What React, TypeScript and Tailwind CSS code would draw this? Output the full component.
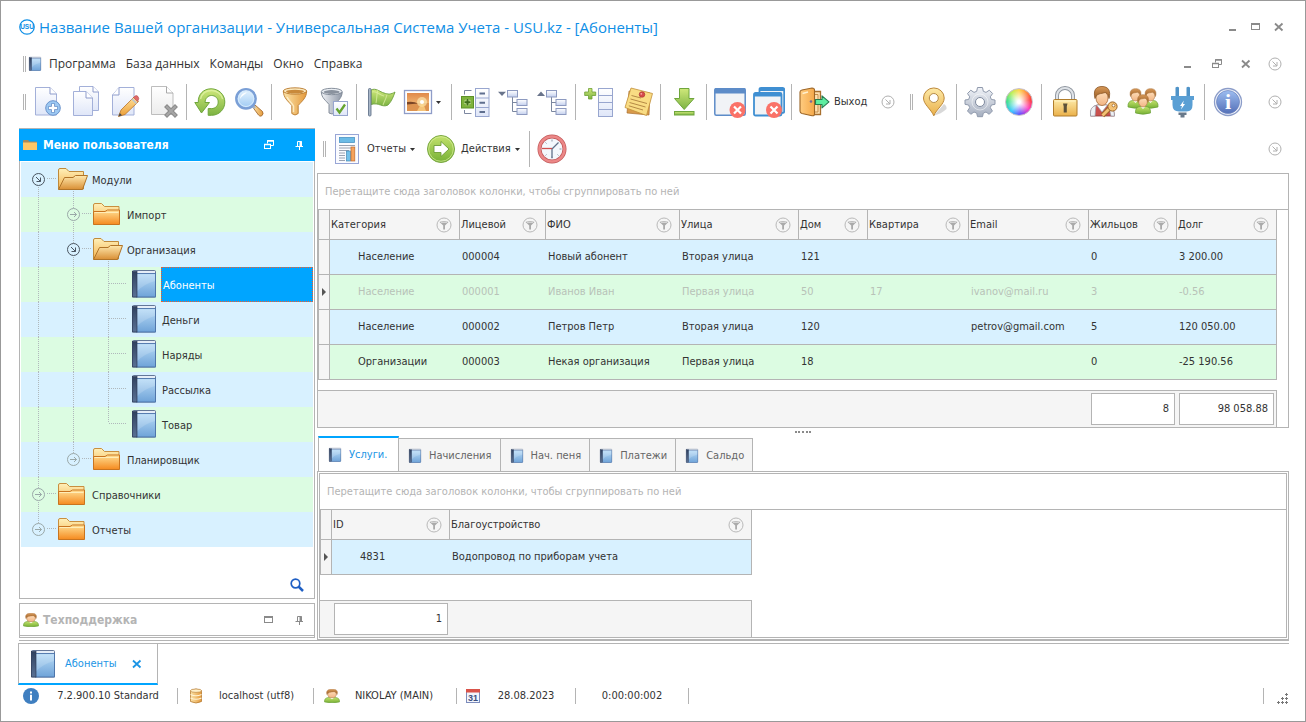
import React from "react";

type IconProps = { children: React.ReactNode; size?: string };

const Svg = ({ children, size = "size-8" }: IconProps) => (
  <svg viewBox="0 0 32 32" className={`${size} shrink-0`} fill="none" aria-hidden="true">
    {children}
  </svg>
);

const gradients: [string, string, string, string][] = [
  ["page", "#ffffff", "#dfe6f8", "v"],
  ["gray", "#ffffff", "#ececec", "v"],
  ["green", "#cfe87a", "#7cb342", "v"],
  ["greenDark", "#c3e26c", "#76b035", "v"],
  ["gold", "#fbe3a8", "#e59a3c", "h"],
  ["goldV", "#fdeaa8", "#eab04a", "v"],
  ["silver", "#f1f3f7", "#8e97a6", "h"],
  ["pencil", "#ffe19a", "#eb9d35", "v"],
  ["lens", "#e8f5ff", "#9cc9f3", "v"],
  ["sunset", "#e0894a", "#f9d08c", "v"],
  ["book", "#b9dcf7", "#6fa3d8", "v"],
  ["spine", "#30415f", "#5a7194", "v"],
  ["folder", "#ffdf94", "#f58a1f", "v"],
  ["folderBack", "#fff0b8", "#f3b24e", "v"],
  ["folderOpen", "#ffe9ad", "#d98f35", "v"],
  ["door", "#ffcc80", "#f5a94a", "h"],
  ["gear", "#f0f3f8", "#a5aebf", "v"],
  ["info", "#9dbdf0", "#5470b8", "v"],
  ["skin", "#ffe0bd", "#f2b584", "v"],
  ["hair", "#d89a5a", "#9a5c22", "v"],
  ["node", "#ffffff", "#c4d0ee", "v"],
];

const Defs = () => (
  <svg className="absolute h-0 w-0" aria-hidden="true">
    <defs>
      {gradients.map(([id, from, to, dir]) => (
        <linearGradient key={id} id={id} x1="0" y1="0" x2={dir === "h" ? "1" : "0"} y2={dir === "h" ? "0" : "1"}>
          <stop offset="0" stopColor={from} />
          <stop offset="1" stopColor={to} />
        </linearGradient>
      ))}
    </defs>
  </svg>
);

const NewDocIcon = () => (
  <Svg>
    <path d="M4.500 1.500H19L25.500 8V29H4.500Z" fill="url(#page)" stroke="#a3b0d9" />
    <path d="M19 1.500V8H25.500" fill="#fff" stroke="#8d9bcb" />
    <circle cx="22" cy="22" r="7.300" fill="#9cc8f2" stroke="#6c94cc" />
    <path d="M22 17.500V26.500M17.500 22H26.500" stroke="#5f86c0" strokeWidth="4" />
    <path d="M22 18V26M18 22H26" stroke="#fff" strokeWidth="2.400" />
  </Svg>
);
const CopyIcon = () => (
  <Svg>
    <path d="M9.500 .5H23L28.500 6V24.500H9.500Z" fill="url(#page)" stroke="#a3b0d9" />
    <path d="M23 .5V6H28.500" fill="#fff" stroke="#8d9bcb" />
    <path d="M3.500 5.500H16L22.500 12V29.500H3.500Z" fill="url(#page)" stroke="#a3b0d9" />
    <path d="M16 5.500V12H22.500" fill="#fff" stroke="#8d9bcb" />
  </Svg>
);
const EditIcon = () => (
  <Svg>
    <path d="M10 1.500H25V29H3.500V9Z" fill="url(#page)" stroke="#a3b0d9" />
    <path d="M10 1.500V9H3.500" fill="#fff" stroke="#8d9bcb" />
    <path d="M9.500 30.500L12 24L25 11L29.500 15.500L16 28.500Z" fill="url(#pencil)" stroke="#b8742a" strokeWidth=".8" />
    <path d="M24.500 11.500L26 10Q27.500 9 29 10.500Q30.500 12.500 29.300 14L28.500 15.500Z" fill="#e06a6a" stroke="#b14a4a" strokeWidth=".6" />
    <path d="M23 13L27.500 17.500" stroke="#b9c3d2" strokeWidth="1.600" />
    <path d="M9.500 30.500L10.800 27L13 29.200Z" fill="#43484f" />
  </Svg>
);
const DeleteIcon = () => (
  <Svg>
    <path d="M3.500 .5H18.500L25 7V28.500H3.500Z" fill="url(#gray)" stroke="#bdbdbd" />
    <path d="M18.500 .5V7H25" fill="#fff" stroke="#a9a9a9" />
    <path d="M19 21L27 29M27 21L19 29" stroke="#8c8c8c" strokeWidth="4.200" strokeLinecap="square" />
    <path d="M19 21L27 29M27 21L19 29" stroke="#a6a6a6" strokeWidth="2" strokeLinecap="square" />
  </Svg>
);
const RefreshIcon = () => (
  <Svg>
    <path
      d="M4.300 16.500C3.800 8.500 9.500 2.800 17 2.800C25 2.800 30.800 8.800 30.800 16C30.800 23.500 25 29.300 17.500 29.300H14.200V22.600H17.500C21.500 22.600 24.200 19.600 24.200 16C24.200 12.200 21.200 9.500 17.500 9.500C14 9.500 11.300 12 11 16.500H15.500L7.500 27L.8 16.500Z"
      fill="url(#green)"
      stroke="#6fa63c"
      strokeLinejoin="round"
    />
    <path d="M6.500 13C8 7 13 4.500 18 4.600C23 4.800 27.500 8 28.700 13" stroke="#e0f2a5" strokeWidth="1.500" opacity=".8" />
  </Svg>
);
const SearchIcon = () => (
  <Svg>
    <path d="M20 21.500L22 19L29.500 25.500Q31 28 28.500 30Q26.800 30.600 25.500 29Z" fill="url(#gold)" stroke="#a66a2c" strokeWidth=".9" />
    <path d="M18.500 18.500L22 22" stroke="#a9b3bf" strokeWidth="3" />
    <circle cx="13" cy="12.800" r="9.700" fill="url(#lens)" stroke="#7a9fd6" strokeWidth="2.400" />
    <circle cx="13" cy="12.800" r="7.700" stroke="#d7ebfc" />
    <path d="M7 13C7.500 9 10 6.500 14 6.500C12 8.500 9 9.500 7 13Z" fill="#fff" opacity=".9" />
  </Svg>
);
const FunnelIcon = () => (
  <Svg>
    <path d="M4.300 5C4.500 12 9 15 12.800 19.500V27.500Q16 30.500 19.200 27.500V19.500C23 15 27.500 12 27.700 5Z" fill="url(#gold)" stroke="#b9792c" strokeWidth=".9" />
    <ellipse cx="16" cy="5" rx="11.700" ry="3.200" fill="#fbe9bf" stroke="#b9792c" strokeWidth=".9" />
    <ellipse cx="16" cy="5.600" rx="9" ry="1.900" fill="#c98a3b" />
    <path d="M8 11C10 15 13 17 14.500 20V26" stroke="#fff4d3" strokeWidth="1.500" opacity=".8" />
  </Svg>
);
const FunnelCheckIcon = () => (
  <Svg>
    <path d="M3.300 6C3.500 12 8 14.500 11 18.500V27Q14 29 17 27V18.500C20 14.500 24 12 24.200 6Z" fill="url(#silver)" stroke="#7b8492" strokeWidth=".9" />
    <ellipse cx="13.700" cy="5.500" rx="10.400" ry="3.200" fill="#e9edf2" stroke="#7b8492" strokeWidth=".9" />
    <ellipse cx="13.700" cy="6" rx="8" ry="1.900" fill="#8a929e" />
    <rect x="15.500" y="15.500" width="14" height="14" fill="url(#page)" stroke="#98a6cf" />
    <path d="M18.500 22.500L21.500 26.500L27 18.500" stroke="#65a42f" strokeWidth="2.300" />
  </Svg>
);
const FlagIcon = () => (
  <Svg>
    <path d="M7 4C12 1.500 16 6 20 7C24 8.500 27 8.500 31 6C29.500 10 28 15 24 19C18 22 15 16 7 18.500Z" fill="url(#green)" stroke="#6c9f3c" strokeWidth=".9" />
    <path d="M8 6C13 4.500 15 9 20 10M14 4C12 10 13 14 12 17M23 8.500C22 13 20 16 19 19" stroke="#dff0a8" strokeWidth="1.100" opacity=".7" />
    <rect x="4.500" y="2.500" width="2.500" height="27.500" rx="1" fill="#a9b7c9" stroke="#64748b" strokeWidth=".9" />
  </Svg>
);
const PictureIcon = () => (
  <Svg>
    <rect x="2.500" y="4.500" width="27" height="23" fill="#fff" stroke="#8f9dc8" strokeWidth="1.300" />
    <rect x="5" y="7" width="22" height="18" fill="url(#sunset)" />
    <path d="M5 17H27V25H5Z" fill="#dd9350" />
    <path d="M5 16Q12 15 16 17.500L5 18.500Z" fill="#7a4526" />
    <circle cx="20" cy="16" r="5" fill="#fff1bd" opacity=".6" />
    <circle cx="20" cy="16" r="2" fill="#fff" />
    <path d="M15 25L19 18H21.500L24 25Z" fill="#ffd98a" opacity=".7" />
  </Svg>
);
const GroupRowsIcon = () => (
  <Svg>
    <path d="M5.500 8.500V4.500H12.500M5.500 24V27.500H12.500" stroke="#7d87a0" />
    <rect x="16.500" y="2.500" width="13.500" height="28" fill="url(#page)" stroke="#98a6cf" />
    <path d="M16.500 12H30M16.500 21.500H30" stroke="#98a6cf" />
    <path d="M20.500 7.500H26M20.500 16.800H26M20.500 26H26" stroke="#5f6f8f" strokeWidth="2" />
    <rect x="2.500" y="10.500" width="12" height="11.500" fill="#7db23c" stroke="#5d9129" />
    <path d="M8.500 13V19.500M5.200 16.200H11.800" stroke="#c9e59a" strokeWidth="3.400" />
    <path d="M8.500 13V19.500M5.500 16.200H11.500" stroke="#3f6f1b" strokeWidth="2" />
  </Svg>
);
const TreeIcon = ({ up = false }: { up?: boolean }) => (
  <Svg>
    <path d={up ? "M0 10H8L4 5.500Z" : "M0 5.800H8L4 10Z"} fill="#69748b" />
    <path d="M14.500 11V25.500H19M14.500 16.500H19" stroke="#7b879f" />
    <rect x="9.500" y="4.500" width="10" height="6.500" fill="url(#node)" stroke="#8d9ac0" />
    <rect x="19" y="13.500" width="10" height="6" fill="url(#node)" stroke="#8d9ac0" />
    <rect x="19" y="22.500" width="10" height="6" fill="url(#node)" stroke="#8d9ac0" />
  </Svg>
);
const AddColumnIcon = () => (
  <Svg>
    <rect x="15.500" y="2.500" width="14" height="28" fill="url(#page)" stroke="#98a6cf" />
    <path d="M15.500 9.500H29.500M15.500 16.500H29.500M15.500 23.500H29.500" stroke="#98a6cf" />
    <path d="M5.500 2.500H9V6H12.700V9.500H9V13H5.500V9.500H1.700V6H5.500Z" fill="url(#green)" stroke="#6c9f36" strokeWidth=".8" />
  </Svg>
);
const NotesIcon = () => (
  <Svg>
    <path d="M7 5L28 7L27 29L5 27Z" fill="#d99a4a" stroke="#a9702f" strokeWidth=".7" />
    <path d="M9 2L30.500 7.500L24.500 29.500L3 21.500Z" fill="#f9dc83" stroke="#c28f3a" strokeWidth=".8" />
    <path d="M9.500 9.500L19 12M8.500 13L25 17.500M7.500 16.500L23.500 21M6.800 19.800L21 24" stroke="#b58a45" />
    <circle cx="20" cy="8.500" r="2.800" fill="#d64a4a" stroke="#a52f2f" strokeWidth=".6" />
    <circle cx="19.300" cy="7.800" r=".9" fill="#f5a8a8" />
  </Svg>
);
const DownloadIcon = () => (
  <Svg>
    <path d="M11.500 2.500H21V12.500H26L16.200 23.500L6.500 12.500H11.500Z" fill="url(#green)" stroke="#6fa63c" strokeLinejoin="round" />
    <rect x="6.500" y="25.500" width="19.500" height="3.500" fill="url(#green)" stroke="#6fa63c" />
  </Svg>
);
const RedCross = ({ x }: { x: number }) => (
  <>
    <circle cx={x} cy="24" r="8" fill="#fa7268" />
    <path d={`M${x - 3.5} 20.500L${x + 3.5} 27.500M${x + 3.5} 20.500L${x - 3.5} 27.500`} stroke="#fff" strokeWidth="2.200" />
  </>
);
const CloseWindowIcon = () => (
  <Svg>
    <rect x=".8" y="2.800" width="30.400" height="26.500" rx="1.500" fill="#f1f3f6" stroke="#5d8cc8" strokeWidth="1.500" />
    <path d="M.5 3Q.5 2 2 2H30Q31.500 2 31.500 3V7.500H.5Z" fill="#5d8cc8" />
    <RedCross x={23.5} />
  </Svg>
);
const CloseAllIcon = () => (
  <Svg>
    <rect x="6.500" y="1.800" width="24.700" height="25" rx="1.500" fill="#f1f3f6" stroke="#3f8fd2" strokeWidth="1.800" />
    <path d="M6 2H31V5H6Z" fill="#3f8fd2" />
    <rect x="1" y="7" width="27.500" height="22.500" rx="1.500" fill="#f1f3f6" stroke="#3f8fd2" strokeWidth="1.800" />
    <path d="M1 7H28V10.500H1Z" fill="#3f8fd2" />
    <RedCross x={21} />
  </Svg>
);
const DoorIcon = () => (
  <Svg>
    <path d="M14 5.500H22.500V28.500H14" fill="#ffe0b0" stroke="#a9702f" strokeWidth="1.300" />
    <path d="M17 8.500H20V26H17" stroke="#c48d4a" />
    <path d="M2 6Q2 4.500 4 4L14 2Q16.500 2 16.500 4V28Q16.500 30 14 29.700L4 27.500Q2 27 2 25Z" fill="url(#door)" stroke="#9c6526" strokeWidth="1.100" />
    <path d="M4.500 7.500L10 6" stroke="#fff0cf" strokeWidth="1.300" />
    <circle cx="13" cy="15.500" r="1.300" fill="#7a6a9a" />
    <path d="M17.500 13.500H24V9.800L31 15.800L24 21.800V18.500H17.500Z" fill="#5eeda0" stroke="#277a50" strokeWidth="1.100" strokeLinejoin="round" />
  </Svg>
);
const PinIcon = () => (
  <Svg>
    <path d="M16 29.500L26 18Q29 20 28.500 23Q23 28 16 29.500Z" fill="#8e8e8e" opacity=".35" />
    <path d="M15.800 29.800C13 23 5.500 18.500 5.500 12A10.300 10 0 0 1 26.200 12C26.200 18.500 18.500 23 15.800 29.800Z" fill="url(#goldV)" stroke="#bd8838" />
    <circle cx="15.800" cy="12" r="4.500" fill="#fff" stroke="#b58a45" />
  </Svg>
);
const GearIcon = () => (
  <Svg>
    <path
      d="M13.500 1.500H18.500L19.300 5.300L22 6.400L25.300 4.200L28.600 7.500L26.300 10.800L27.400 13.500L31 14V18.300L27.400 19L26.300 21.700L28.400 25L25.200 28.300L22 26L19.300 27.100L18.500 30.700H13.500L12.700 27.100L10 26L6.800 28.300L3.500 25L5.700 21.700L4.600 19L1 18.300V14L4.600 13.500L5.700 10.800L3.500 7.500L6.800 4.200L10 6.400L12.700 5.300Z"
      fill="url(#gear)"
      stroke="#8f99ac"
      strokeLinejoin="round"
    />
    <circle cx="16" cy="16" r="8" stroke="#fff" opacity=".5" />
    <circle cx="16" cy="16" r="4.500" fill="#fff" stroke="#7f8a9e" />
  </Svg>
);
const ColorWheel = () => (
  <span className="size-7 rounded-full border border-[#c8c0cc] bg-[radial-gradient(circle,#ffffff_8%,#ffffff00_65%),conic-gradient(#ffd84a,#ff3b3b_80deg,#ff3fc0_125deg,#6a4dff_175deg,#36c9ff_220deg,#3fe08a_275deg,#b8f05a_320deg,#ffd84a)]" />
);
const LockIcon = () => (
  <Svg>
    <path d="M8 14V9.500A8 7.500 0 0 1 24 9.500V14" stroke="#8d949d" strokeWidth="4" />
    <path d="M8 14V9.500A8 7.500 0 0 1 24 9.500V14" stroke="#dfe3e8" strokeWidth="2.200" />
    <rect x="4.500" y="13.500" width="23.500" height="16.500" rx="1" fill="url(#goldV)" stroke="#b07d2c" />
    <path d="M14 17.500H18.500L17.800 20.500V26.500H14.700V20.500Z" fill="#5d5138" />
    <path d="M6 15H26.500" stroke="#fff3c4" />
  </Svg>
);
const UserKeyIcon = () => (
  <Svg>
    <path d="M2.500 30Q1.500 20.500 9.500 19H18.500Q26 20.500 26.500 30Z" fill="#c9504e" stroke="#8c3a3a" strokeWidth=".8" />
    <path d="M2.500 30Q1.500 20.500 8 19.500L7 30ZM26.500 30Q26 21 20.500 19.500L23 30Z" fill="#eef0f4" stroke="#98a0ad" strokeWidth=".7" />
    <path d="M8.500 19L14 26L19.500 19Z" fill="#fff" stroke="#98a0ad" strokeWidth=".7" />
    <ellipse cx="14" cy="12" rx="6" ry="7.500" fill="url(#skin)" stroke="#a86b36" strokeWidth=".8" />
    <path d="M7 12.500C5 4 8 .5 14 .5C20.500 .5 23 5 21 12.500C20.500 8.500 19 7 17 6.500C13 8 8.500 7 7 12.500Z" fill="url(#hair)" stroke="#8a5423" strokeWidth=".8" />
    <path d="M14.500 29.500L21.500 22.500" stroke="#9c6526" strokeWidth="4.600" />
    <path d="M14.500 29.500L21.500 22.500" stroke="#f4c174" strokeWidth="2.800" />
    <circle cx="24.500" cy="20.500" r="4.600" fill="#f4c174" stroke="#9c6526" />
    <circle cx="25.500" cy="19.500" r="1.400" fill="#fff" stroke="#9c6526" strokeWidth=".8" />
  </Svg>
);
const Person = ({ x, y }: { x: number; y: number }) => (
  <g transform={`translate(${x} ${y})`}>
    <path d="M-7.500 15.500Q-8 9.500-3 9H3Q8 9.500 7.500 15.500Q0 18-7.500 15.500Z" fill="url(#greenDark)" stroke="#6a9f38" strokeWidth=".7" />
    <path d="M-2.500 9L0 11.500L2.500 9Z" fill="#fff" />
    <ellipse cx="0" cy="4.500" rx="4.300" ry="5" fill="url(#skin)" stroke="#b07a48" strokeWidth=".6" />
    <path d="M-5 5C-6.500-1-3.500-2.800 0-2.800C4-2.800 6.500-1 5 5C4.500 2 3 1 2 .8C-1 1.500-4 1-5 5Z" fill="url(#hair)" stroke="#a66c34" strokeWidth=".5" />
  </g>
);
const UsersIcon = () => (
  <Svg>
    <Person x={8.5} y={5.5} />
    <Person x={23.5} y={5.5} />
    <Person x={16} y={11.5} />
  </Svg>
);
const PlugIcon = () => (
  <Svg>
    <path d="M9.500 1.500Q11.500 0 13 1.500V10.500H9.500ZM20.500 1.500Q22 0 24 1.500V10.500H20.500Z" fill="#4f93c8" />
    <path d="M5 10H28V14H26.500V19Q26.500 25.500 20.500 25.500H13Q6.500 25.500 6.500 19V14H5Z" fill="#5a9fd4" />
    <path d="M12.500 26.500H20.500V29H18.500V31.500H14.500V29H12.500Z" fill="#69798a" />
    <path d="M17.800 14.500L14 20H16L15 23.500L19 18H17Z" fill="#fff" />
  </Svg>
);
const InfoIcon = () => (
  <Svg>
    <circle cx="16" cy="16" r="13.500" fill="#f3f6fc" stroke="#8c9dc9" strokeWidth="1.300" />
    <circle cx="16" cy="16" r="11.500" fill="url(#info)" stroke="#6b82bd" strokeWidth=".7" />
    <text x="16" y="23" textAnchor="middle" fontSize="22" fontWeight="bold" fontFamily="Liberation Serif, serif" fill="#fff">
      i
    </text>
  </Svg>
);
const ReportIcon = () => (
  <Svg>
    <rect x="4.500" y="1.500" width="23" height="29" fill="#fafbff" stroke="#98a6d6" />
    <rect x="8.500" y="4.500" width="15" height="5" fill="#6bbbe6" stroke="#4b94c4" strokeWidth=".8" />
    <path d="M8 12.500H24M8 15H24M8 17.500H18M8 20H14M8 22.500H14M8 25H14M8 27.500H14" stroke="#8f97a8" strokeWidth=".9" />
    <rect x="15.500" y="18" width="4" height="10" fill="#72c0ea" stroke="#4389b5" strokeWidth=".7" />
    <rect x="20" y="14" width="3.800" height="14" fill="#f5a25c" stroke="#c26b2c" strokeWidth=".7" />
  </Svg>
);
const ActionIcon = () => (
  <Svg>
    <circle cx="16" cy="16" r="13.500" fill="url(#greenDark)" stroke="#7aa842" />
    <circle cx="16" cy="16" r="12.300" stroke="#d8ee9b" opacity=".7" />
    <path d="M9 12.500H16V8.500L24 16L16 23.500V19.500H9Z" fill="#fff" stroke="#6d9c36" strokeWidth=".9" />
  </Svg>
);
const ClockIcon = () => (
  <Svg>
    <circle cx="16" cy="16" r="12.500" fill="#f4f8fc" stroke="#c05a5a" strokeWidth="4" />
    <circle cx="16" cy="16" r="12.500" stroke="#ec8787" strokeWidth="2.600" />
    <path d="M16 6.500V8.500M16 25.500V23.500M25.500 16H23.500M9.500 9.500L10.500 10.500M22.500 22.500L21.500 21.500M9.500 22.500L10.500 21.500" stroke="#8b96a6" />
    <path d="M16 16L22.500 9.500M16 16V25" stroke="#62718a" strokeWidth="1.300" />
    <path d="M16 15.500H6" stroke="#d04f4f" strokeWidth="1.300" />
  </Svg>
);
const BookIcon = ({ size = "size-8" }: { size?: string }) => (
  <Svg size={size}>
    <rect x="4.500" y="2.500" width="23" height="26.500" rx="1" fill="#e6eef8" stroke="#56698c" strokeWidth=".9" />
    <rect x="8.500" y="5.500" width="19" height="23.500" fill="url(#book)" stroke="#4a72a8" strokeWidth=".9" />
    <rect x="4.500" y="3.500" width="4.500" height="25.500" fill="url(#spine)" stroke="#2b3a56" strokeWidth=".7" />
    <path d="M9.500 6.500H27V13Q16 16 9.500 23Z" fill="#fff" opacity=".16" />
  </Svg>
);
const PersonIcon = () => (
  <svg viewBox="-8 -3 16 20" preserveAspectRatio="none" className="h-3.5 w-4 shrink-0" aria-hidden="true">
    <Person x={0} y={0} />
  </svg>
);
const DatabaseIcon = () => (
  <svg viewBox="0 0 16 16" className="size-4 shrink-0" aria-hidden="true">
    <path d="M2.500 2.500Q8 -.5 13.500 2.500V13.500Q8 16.500 2.500 13.500Z" fill="url(#gold)" stroke="#b57a30" strokeWidth=".8" />
    <ellipse cx="8" cy="2.700" rx="5.500" ry="1.700" fill="#fff0c9" stroke="#b57a30" strokeWidth=".6" />
    <path d="M2.500 6.500Q8 9 13.500 6.500M2.500 10Q8 12.500 13.500 10" stroke="#fff4d6" fill="none" strokeWidth="1.200" />
  </svg>
);
const CalendarIcon = () => (
  <svg viewBox="0 0 16 16" className="size-4 shrink-0" aria-hidden="true">
    <rect x="1.500" y="1.500" width="13" height="13" fill="#f2f5fc" stroke="#7c8cbc" />
    <rect x="1" y="1" width="14" height="3.500" fill="#d9534a" />
    <text x="8" y="13" textAnchor="middle" fontSize="9" fontWeight="bold" fontFamily="Liberation Sans, sans-serif" fill="#3d4f7c">
      31
    </text>
  </svg>
);
const ArrowCircle = () => (
  <svg viewBox="0 0 14 14" className="size-3.5 shrink-0" fill="none" stroke="#b0b0b0" aria-hidden="true">
    <circle cx="7" cy="7" r="6" />
    <path d="M4.500 4.500L9 9M9 5V9H5" />
  </svg>
);
const FilterIcon = () => (
  <svg viewBox="0 0 16 16" className="size-4" fill="none" aria-hidden="true">
    <circle cx="8" cy="8" r="7" stroke="#b9b9b9" />
    <path d="M3.500 5Q8 3.200 12.500 5L9 8.500V12.500H7.200V8.500Z" fill="#aaaaaa" />
    <path d="M5 5.200H11" stroke="#f5f5f5" strokeWidth=".8" />
  </svg>
);

type GlyphKind = "min" | "max" | "restore" | "close" | "pin";
const Glyph = ({ kind }: { kind: GlyphKind }) => (
  <svg viewBox="0 0 12 12" className="size-3" fill="none" stroke="currentColor" aria-hidden="true">
    {kind === "min" && <path d="M2 9H9" strokeWidth="2" />}
    {kind === "max" && (
      <>
        <rect x="1.500" y="2.500" width="8" height="6" />
        <path d="M1 3H10" strokeWidth="2" />
      </>
    )}
    {kind === "restore" && (
      <>
        <path d="M4.500 4.500V1.500H10.500V6.500H8" />
        <path d="M4 2H11M1 5.500H8" strokeWidth="1.500" />
        <rect x="1.500" y="5.500" width="6" height="4" />
      </>
    )}
    {kind === "close" && <path d="M2 2.500L9.500 9.500M9.500 2.500L2 9.500" strokeWidth="1.800" />}
    {kind === "pin" && (
      <>
        <path d="M4.500 7V2.500H8.500V7M2.500 7.500H10M6.500 7V11" />
        <path d="M7.500 2V7.500" strokeWidth="2" />
      </>
    )}
  </svg>
);
const GlyphButton = ({ kind, label }: { kind: GlyphKind; label: string }) => (
  <button aria-label={label} className="flex size-5 items-center justify-center text-[#8a8a8a]">
    <Glyph kind={kind} />
  </button>
);

const Grip = () => <span className="ml-1 mr-px h-4 w-[3px] shrink-0 border-x border-[#b4b4b4]" />;
const Separator = () => <span className="mx-[3px] h-9 w-px shrink-0 bg-[#b4b4b4]" />;
const Caret = () => (
  <svg viewBox="0 0 5 3" className="h-[3px] w-[5px] shrink-0" aria-hidden="true">
    <path d="M0 0H5L2.500 3Z" fill="#333" />
  </svg>
);
const Tool = ({ label, children }: { label: string; children: React.ReactNode }) => (
  <button aria-label={label} className="flex h-9 w-[39px] shrink-0 items-center justify-center">
    {children}
  </button>
);
const MoreButton = () => (
  <button aria-label="Настройка панели" className="flex size-5 shrink-0 items-center justify-center">
    <ArrowCircle />
  </button>
);

const MainToolbar = () => (
  <div className="mt-[9px] flex h-9 items-center">
    <Grip />
    <Tool label="Добавить"><NewDocIcon /></Tool>
    <Tool label="Копировать"><CopyIcon /></Tool>
    <Tool label="Изменить"><EditIcon /></Tool>
    <Tool label="Удалить"><DeleteIcon /></Tool>
    <Separator />
    <Tool label="Обновить"><RefreshIcon /></Tool>
    <Tool label="Поиск"><SearchIcon /></Tool>
    <Separator />
    <Tool label="Фильтр"><FunnelIcon /></Tool>
    <Tool label="Применить фильтр"><FunnelCheckIcon /></Tool>
    <Separator />
    <Tool label="Флаг"><FlagIcon /></Tool>
    <button aria-label="Изображение" className="flex h-9 w-[49px] shrink-0 items-center gap-0.5 pl-[3px]">
      <PictureIcon />
      <Caret />
    </button>
    <Separator />
    <Tool label="Группировка"><GroupRowsIcon /></Tool>
    <Tool label="Развернуть все"><TreeIcon /></Tool>
    <Tool label="Свернуть все"><TreeIcon up /></Tool>
    <Separator />
    <Tool label="Добавить колонку"><AddColumnIcon /></Tool>
    <Tool label="Заметки"><NotesIcon /></Tool>
    <Separator />
    <Tool label="Загрузить"><DownloadIcon /></Tool>
    <Separator />
    <Tool label="Закрыть окно"><CloseWindowIcon /></Tool>
    <Tool label="Закрыть все окна"><CloseAllIcon /></Tool>
    <Separator />
    <button className="flex h-9 shrink-0 items-center gap-1 px-[3px]">
      <DoorIcon />
      <span>Выход</span>
    </button>
    <span className="mx-2 flex">
      <MoreButton />
    </span>
    <Grip />
    <Tool label="Карта"><PinIcon /></Tool>
    <Separator />
    <Tool label="Настройки"><GearIcon /></Tool>
    <Tool label="Цвета"><ColorWheel /></Tool>
    <Separator />
    <Tool label="Блокировка"><LockIcon /></Tool>
    <Tool label="Права доступа"><UserKeyIcon /></Tool>
    <Tool label="Пользователи"><UsersIcon /></Tool>
    <Tool label="Подключение"><PlugIcon /></Tool>
    <Separator />
    <Tool label="О программе"><InfoIcon /></Tool>
    <span className="ml-auto mr-1 flex">
      <MoreButton />
    </span>
  </div>
);

type Mark = "line" | "tee" | "end" | "open" | "openFirst" | "closed" | "closedEnd";

const Guide = ({ mark }: { mark: Mark }) => {
  const open = mark === "open" || mark === "openFirst";
  const node = open || mark === "closed" || mark === "closedEnd";
  const tone = open ? "#4a5560" : "#9aa8a8";
  return (
    <svg viewBox="0 0 35 35" className="h-[35px] w-[35px] shrink-0" fill="none" aria-hidden="true">
      <g stroke="#b0b8bc" strokeDasharray="1 1">
        {mark === "line" || mark === "tee" ? <path d="M17.500 0V35" /> : null}
        {mark === "end" ? <path d="M17.500 0V16" /> : null}
        {mark === "tee" || mark === "end" ? <path d="M18 16.500H35" /> : null}
        {node ? <path d="M26 16.500H35" /> : null}
        {node && mark !== "openFirst" ? <path d="M17.500 0V11" /> : null}
        {node && mark !== "closedEnd" ? <path d="M17.500 25V35" /> : null}
      </g>
      {node ? (
        <g stroke={tone}>
          <circle cx="17.500" cy="17.500" r="6" />
          {open ? <path d="M15 15L19.500 19.500M19.500 15.500V19.500H15.500" /> : <path d="M14 17.500H20.500M18 15L20.500 17.500L18 20" />}
        </g>
      ) : null}
    </svg>
  );
};

const TreeFolder = ({ open }: { open: boolean }) => (
  <svg viewBox="0 0 35 35" className="h-[35px] w-[35px] shrink-0" fill="none" aria-hidden="true">
    {open && <path d="M17.500 29V35" stroke="#b0b8bc" strokeDasharray="1 1" />}
    {open ? (
      <>
        <path d="M2.500 27V8Q2.500 6.500 4 6.500H10L13 9.500H27.500V27Z" fill="url(#folderBack)" stroke="#c08a3a" />
        <path d="M2.500 27.500L8.500 15.500H17L19.500 13.500H31.500L26.500 27.500Z" fill="url(#folderOpen)" stroke="#b07428" />
      </>
    ) : (
      <>
        <path d="M2.500 27V8Q2.500 6.500 4 6.500H10.500L13.500 9.500H28V27Z" fill="url(#folderBack)" stroke="#c98f3f" />
        <path d="M2.500 14.500H14L16.500 13H28.500V27.500H2.500Z" fill="url(#folder)" stroke="#c9741f" />
        <path d="M3.500 15.500H27.500" stroke="#ffedb8" />
      </>
    )}
  </svg>
);

type TreeNode = { label: string; icon: "open" | "closed" | "book"; guides: Mark[]; selected?: boolean };
const nodes: TreeNode[] = [
  { label: "Модули", icon: "open", guides: ["openFirst"] },
  { label: "Импорт", icon: "closed", guides: ["line", "closed"] },
  { label: "Организация", icon: "open", guides: ["line", "open"] },
  { label: "Абоненты", icon: "book", guides: ["line", "line", "tee"], selected: true },
  { label: "Деньги", icon: "book", guides: ["line", "line", "tee"] },
  { label: "Наряды", icon: "book", guides: ["line", "line", "tee"] },
  { label: "Рассылка", icon: "book", guides: ["line", "line", "tee"] },
  { label: "Товар", icon: "book", guides: ["line", "line", "end"] },
  { label: "Планировщик", icon: "closed", guides: ["line", "closedEnd"] },
  { label: "Справочники", icon: "closed", guides: ["closed"] },
  { label: "Отчеты", icon: "closed", guides: ["closedEnd"] },
];

const Sidebar = () => (
  <aside className="flex w-[296px] shrink-0 flex-col gap-1 pb-0.5">
    <section className="flex flex-1 flex-col border border-[#b4b4b4]">
      <header className="-mx-px flex h-8 items-center bg-[#00a5ff] pl-1 pr-1.5 text-white">
        <svg viewBox="0 0 14 10" className="h-2.5 w-3.5" aria-hidden="true">
          <path d="M0 1Q0 0 1 0H5L6.500 1.500H13Q14 1.500 14 2.500V10H0Z" fill="#a88a5c" />
          <path d="M0 2.500H14V10H0Z" fill="#ffc766" />
        </svg>
        <h2 className="ml-1.5 text-[12px] font-bold">Меню пользователя</h2>
        <button aria-label="Развернуть" className="ml-auto flex size-5 items-center justify-center">
          <Glyph kind="restore" />
        </button>
        <button aria-label="Закрепить" className="ml-2.5 flex size-5 items-center justify-center">
          <Glyph kind="pin" />
        </button>
      </header>
      <ul className="mt-px px-px">
        {nodes.map((n) => (
          <li key={n.label} className="flex h-[35px] odd:bg-[#d8f1ff] even:bg-[#dcfce2]">
            {n.guides.map((g, i) => (
              <Guide key={i} mark={g} />
            ))}
            {n.icon === "book" ? (
              <span className="flex w-[35px] shrink-0 justify-center pt-px">
                <BookIcon />
              </span>
            ) : (
              <TreeFolder open={n.icon === "open"} />
            )}
            <button
              className={
                n.selected
                  ? "flex-1 border border-dotted border-[#ff5a1f] bg-[#00a5ff] px-px pt-0.5 text-left text-white"
                  : "flex-1 px-px pt-0.5 text-left"
              }
            >
              {n.label}
            </button>
          </li>
        ))}
      </ul>
      <button aria-label="Найти" className="mb-1.5 ml-auto mr-2.5 mt-auto">
        <svg viewBox="0 0 14 14" className="size-3.5" fill="none" stroke="#1f5fc4" aria-hidden="true">
          <circle cx="5.500" cy="5.500" r="4.300" strokeWidth="1.700" />
          <path d="M8.500 8.500L13 13" strokeWidth="2.500" />
        </svg>
      </button>
    </section>
    <section className="border border-[#b4b4b4] pb-px">
      <header className="flex h-8 items-center border-b border-[#b4b4b4] pl-[3px] pr-[5px]">
        <PersonIcon />
        <h2 className="ml-1 text-[12px] font-bold text-[#b4b4b4]">Техподдержка</h2>
        <span className="ml-auto flex gap-2.5">
          <GlyphButton kind="max" label="Развернуть панель" />
          <GlyphButton kind="pin" label="Закрепить панель" />
        </span>
      </header>
    </section>
  </aside>
);

type GridProps = {
  label: string;
  columns: { title: string; width: string }[];
  rows: string[][];
  current: number;
  dimmed?: number;
};

const GroupPanel = () => (
  <p className="flex h-[35px] items-center px-[7px] text-[#b4b4b4]">
    Перетащите сюда заголовок колонки, чтобы сгруппировать по ней
  </p>
);

const DataGrid = ({ label, columns, rows, current, dimmed }: GridProps) => (
  <table
    aria-label={label}
    className="-mt-px w-full table-fixed border-separate border-spacing-0 border-l border-t border-[#b4b4b4]"
  >
    <colgroup>
      <col className="w-[11px]" />
      {columns.map((c) => (
        <col key={c.title} className={c.width} />
      ))}
    </colgroup>
    <thead>
      <tr className="h-[30px] bg-[#f5f5f5]">
        <td className="border-b border-r border-[#b4b4b4] p-0" />
        {columns.map((c) => (
          <th key={c.title} scope="col" className="border-b border-r border-[#b4b4b4] p-0 font-normal">
            <div className="flex items-center justify-between pl-px pr-[7px]">
              <span>{c.title}</span>
              <button aria-label={`Фильтр: ${c.title}`}>
                <FilterIcon />
              </button>
            </div>
          </th>
        ))}
      </tr>
    </thead>
    <tbody>
      {rows.map((r, i) => (
        <tr
          key={i}
          className={`h-[35px] odd:bg-[#d8f1ff] even:bg-[#dcfce2] ${i === dimmed ? "text-[#b8c2b8]" : ""}`}
        >
          <td className="border-b border-r border-[#b4b4b4] bg-[#f5f5f5] p-0">
            {i === current && (
              <svg viewBox="0 0 4 8" className="mx-auto h-2 w-1" aria-hidden="true">
                <path d="M0 0L4 4L0 8Z" fill="#555" />
              </svg>
            )}
          </td>
          {r.map((cell, j) => (
            <td
              key={j}
              className={`border-b border-[#b4b4b4] p-0 last:border-r ${j === 0 ? "pl-7" : "pl-0.5"}`}
            >
              {cell}
            </td>
          ))}
        </tr>
      ))}
    </tbody>
  </table>
);

const subscriberColumns = [
  { title: "Категория", width: "w-[130px]" },
  { title: "Лицевой", width: "w-[86px]" },
  { title: "ФИО", width: "w-[134px]" },
  { title: "Улица", width: "w-[119px]" },
  { title: "Дом", width: "w-[69px]" },
  { title: "Квартира", width: "w-[101px]" },
  { title: "Email", width: "w-[120px]" },
  { title: "Жильцов", width: "w-[88px]" },
  { title: "Долг", width: "w-[100px]" },
];
const subscribers = [
  ["Население", "000004", "Новый абонент", "Вторая улица", "121", "", "", "0", "3 200.00"],
  ["Население", "000001", "Иванов Иван", "Первая улица", "50", "17", "ivanov@mail.ru", "3", "-0.56"],
  ["Население", "000002", "Петров Петр", "Вторая улица", "120", "", "petrov@gmail.com", "5", "120 050.00"],
  ["Организации", "000003", "Некая организация", "Первая улица", "18", "", "", "0", "-25 190.56"],
];
const serviceColumns = [
  { title: "ID", width: "w-[118px]" },
  { title: "Благоустройство", width: "w-[302px]" },
];
const services = [["4831", "Водопровод по приборам учета"]];
const detailTabs = ["Начисления", "Нач. пеня", "Платежи", "Сальдо"];

const Workspace = () => (
  <main className="flex min-w-0 flex-1 flex-col">
    <div className="flex h-[45px] items-center pb-[3px] pl-0.5">
      <Grip />
      <button className="flex h-9 items-center gap-1 px-1">
        <ReportIcon />
        <span>Отчеты</span>
        <Caret />
      </button>
      <button className="ml-1 flex h-9 items-center gap-1 px-0.5">
        <ActionIcon />
        <span>Действия</span>
        <Caret />
      </button>
      <span className="ml-1 flex">
        <Separator />
      </span>
      <Tool label="Время"><ClockIcon /></Tool>
      <span className="ml-auto mr-1 flex">
        <MoreButton />
      </span>
    </div>

    <section className="border border-[#b4b4b4]">
      <div className="border-b border-[#b4b4b4]">
        <GroupPanel />
      </div>
      <div className="mr-[11px]">
        <DataGrid label="Абоненты" columns={subscriberColumns} rows={subscribers} current={1} dimmed={1} />
        <div className="mt-2.5 flex h-[37px] justify-end gap-1 border-r border-t border-[#b4b4b4] bg-[#f5f5f5] px-0.5 py-0.5">
          <output className="flex w-[84px] items-center justify-end border border-[#b4b4b4] bg-white px-[5px]">8</output>
          <output className="flex w-[95px] items-center justify-end border border-[#b4b4b4] bg-white px-[5px]">98 058.88</output>
        </div>
      </div>
    </section>
    <div className="flex h-2 items-center justify-center">
      <span className="w-4 border-t-2 border-dotted border-[#8a8a8a]" />
    </div>

    <div role="tablist" className="flex items-end pl-px">
      <button
        role="tab"
        aria-selected="true"
        className="-mb-px flex h-9 w-[81px] items-center gap-1.5 border-x border-t-2 border-x-[#b4b4b4] border-t-[#00a5ff] bg-white pl-2 text-[#1b95e5]"
      >
        <BookIcon size="size-4" />
        <span>Услуги.</span>
      </button>
      {detailTabs.map((t) => (
        <button
          key={t}
          role="tab"
          aria-selected="false"
          className="flex h-[33px] items-center gap-1.5 border-r border-t border-[#b4b4b4] bg-[#f5f5f5] px-2 pt-0.5 text-[#666]"
        >
          <BookIcon size="size-4" />
          <span>{t}</span>
        </button>
      ))}
    </div>
    <section className="flex flex-1 border border-[#b4b4b4] p-px">
      <div className="flex flex-1 flex-col border border-[#b4b4b4]">
        <div className="border-b border-[#b4b4b4]">
          <GroupPanel />
        </div>
        <div className="flex w-[432px] flex-1 flex-col">
          <DataGrid label="Услуги" columns={serviceColumns} rows={services} current={0} />
          <div className="mt-auto flex h-[37px] border-r border-t border-[#b4b4b4] bg-[#f5f5f5] px-3.5 py-0.5">
            <output className="flex w-[114px] items-center justify-end border border-[#b4b4b4] bg-white px-[5px]">1</output>
          </div>
        </div>
      </div>
    </section>
  </main>
);

const StatusItem = ({ icon, width, children }: { icon?: React.ReactNode; width: string; children: React.ReactNode }) => (
  <div className={`flex h-4 items-center border-r border-[#b4b4b4] ${width}`}>
    {icon}
    <span className="flex-1 text-center">{children}</span>
  </div>
);

const StatusBar = () => (
  <footer className="flex h-9 items-start pl-1 pt-[3px]">
    <StatusItem
      width="w-[155px]"
      icon={
        <svg viewBox="0 0 16 16" className="size-4" aria-hidden="true">
          <circle cx="8" cy="8" r="8" fill="#3f7fc0" />
          <path d="M7 3.500H9V5.500H7ZM7 6.800H9V12.500H7Z" fill="#fff" />
        </svg>
      }
    >
      7.2.900.10 Standard
    </StatusItem>
    <StatusItem width="w-[136px] pl-2.5 pr-1" icon={<DatabaseIcon />}>localhost (utf8)</StatusItem>
    <StatusItem width="w-[143px] pl-2.5 pr-2" icon={<PersonIcon />}>NIKOLAY (MAIN)</StatusItem>
    <StatusItem width="w-[119px] pl-2 pr-1" icon={<CalendarIcon />}>28.08.2023</StatusItem>
    <StatusItem width="w-[113px]">0:00:00:002</StatusItem>
    <div className="ml-auto mr-px flex h-4 items-end gap-3 border-l border-[#b4b4b4] pl-3">
      <svg viewBox="0 0 12 12" className="size-3" stroke="#777" aria-hidden="true">
        <path d="M9 2.500H12M5 6.500H8M9 6.500H12M1 10.500H4M5 10.500H8M9 10.500H12M10.500 1V4M6.500 5V8M10.500 5V8M2.500 9V12M6.500 9V12M10.500 9V12" />
      </svg>
    </div>
  </footer>
);

export default function App() {
  return (
    <div className="flex min-h-screen flex-col border border-[#999] bg-white pl-[18px] pr-4 font-['DejaVu_Sans_Condensed','Open_Sans',sans-serif] text-[11px] leading-4 text-[#333]">
      <Defs />
      <header className="flex h-[52px] items-center font-['Open_Sans',sans-serif]">
        <svg viewBox="0 0 16 16" className="size-4 shrink-0" fill="none" aria-hidden="true">
          <circle cx="8" cy="8" r="7.200" stroke="#0f8fe6" strokeWidth="1.300" />
          <text x="8" y="10.400" textAnchor="middle" fontSize="6.500" fontWeight="bold" fontFamily="Liberation Sans, sans-serif" fill="#0f8fe6">
            USU
          </text>
        </svg>
        <h1 className="ml-1 truncate text-[15px] leading-6 text-[#0f8fe6]">
          Название Вашей организации - Универсальная Система Учета - USU.kz - [Абоненты]
        </h1>
        <div className="ml-auto flex gap-[3px]">
          <GlyphButton kind="min" label="Свернуть" />
          <GlyphButton kind="max" label="Развернуть" />
          <GlyphButton kind="close" label="Закрыть" />
        </div>
      </header>

      <div className="flex h-[22px] items-center font-['Open_Sans',sans-serif] text-[12px]">
        <Grip />
        <BookIcon size="size-4" />
        <nav className="ml-1.5 flex gap-2.5">
          {["Программа", "База данных", "Команды", "Окно", "Справка"].map((m) => (
            <button key={m}>{m}</button>
          ))}
        </nav>
        <div className="ml-auto mr-1 flex gap-[9px]">
          <GlyphButton kind="min" label="Свернуть документ" />
          <GlyphButton kind="restore" label="Восстановить документ" />
          <GlyphButton kind="close" label="Закрыть документ" />
          <MoreButton />
        </div>
      </div>

      <MainToolbar />

      <div className="mt-2 flex flex-1 gap-0.5 border-b border-[#b4b4b4]">
        <Sidebar />
        <Workspace />
      </div>

      <div className="mt-0.5 flex h-[42px] border-t border-[#b4b4b4]">
        <div className="-ml-px -mt-px flex w-[140px] items-center border border-b-2 border-[#b4b4b4] border-b-[#00a5ff] pl-2 text-[#1b95e5]">
          <BookIcon />
          <button className="ml-1.5">Абоненты</button>
          <button aria-label="Закрыть вкладку" className="ml-3 flex size-4 items-center justify-center">
            <Glyph kind="close" />
          </button>
        </div>
      </div>
      <StatusBar />
    </div>
  );
}
